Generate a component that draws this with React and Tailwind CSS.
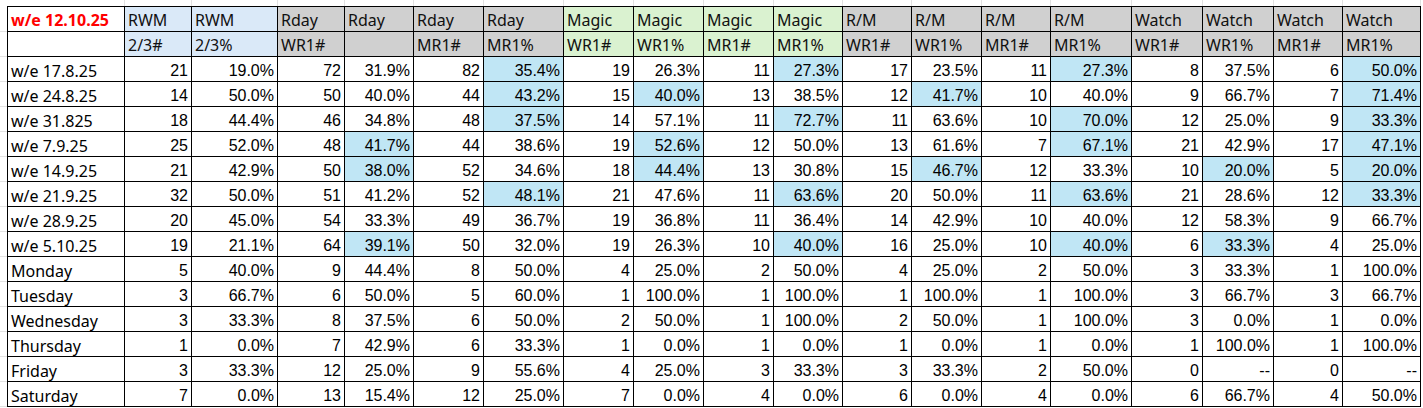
import React from "react";

const widths = [116, 66, 85, 66, 68, 69, 79, 69, 69, 69, 68, 68, 69, 68, 80, 70, 70, 68, 77];

const h1 = ["w/e 12.10.25", "RWM", "RWM", "Rday", "Rday", "Rday", "Rday", "Magic", "Magic", "Magic", "Magic", "R/M", "R/M", "R/M", "R/M", "Watch", "Watch", "Watch", "Watch"];
const h2 = ["", "2/3#", "2/3%", "WR1#", "", "MR1#", "MR1%", "WR1#", "WR1%", "MR1#", "MR1%", "WR1#", "WR1%", "MR1#", "MR1%", "WR1#", "WR1%", "MR1#", "MR1%"];

const headBg = (i) => {
  if (i === 0) return "bg-white";
  if (i <= 2) return "bg-[#dae9f8]";
  if (i >= 7 && i <= 10) return "bg-[#daf2d0]";
  return "bg-[#d0d0d0]";
};

const rows = [
  ["w/e 17.8.25", "21", "19.0%", "72", "31.9%", "82", "35.4%*", "19", "26.3%", "11", "27.3%*", "17", "23.5%", "11", "27.3%*", "8", "37.5%", "6", "50.0%*"],
  ["w/e 24.8.25", "14", "50.0%", "50", "40.0%", "44", "43.2%*", "15", "40.0%*", "13", "38.5%", "12", "41.7%*", "10", "40.0%", "9", "66.7%", "7", "71.4%*"],
  ["w/e 31.825", "18", "44.4%", "46", "34.8%", "48", "37.5%*", "14", "57.1%", "11", "72.7%*", "11", "63.6%", "10", "70.0%*", "12", "25.0%", "9", "33.3%*"],
  ["w/e 7.9.25", "25", "52.0%", "48", "41.7%*", "44", "38.6%", "19", "52.6%*", "12", "50.0%", "13", "61.6%", "7", "67.1%*", "21", "42.9%", "17", "47.1%*"],
  ["w/e 14.9.25", "21", "42.9%", "50", "38.0%*", "52", "34.6%", "18", "44.4%*", "13", "30.8%", "15", "46.7%*", "12", "33.3%", "10", "20.0%*", "5", "20.0%*"],
  ["w/e 21.9.25", "32", "50.0%", "51", "41.2%", "52", "48.1%*", "21", "47.6%", "11", "63.6%*", "20", "50.0%", "11", "63.6%*", "21", "28.6%", "12", "33.3%*"],
  ["w/e 28.9.25", "20", "45.0%", "54", "33.3%", "49", "36.7%", "19", "36.8%", "11", "36.4%", "14", "42.9%", "10", "40.0%", "12", "58.3%", "9", "66.7%"],
  ["w/e 5.10.25", "19", "21.1%", "64", "39.1%*", "50", "32.0%", "19", "26.3%", "10", "40.0%*", "16", "25.0%", "10", "40.0%*", "6", "33.3%*", "4", "25.0%"],
  ["Monday", "5", "40.0%", "9", "44.4%", "8", "50.0%", "4", "25.0%", "2", "50.0%", "4", "25.0%", "2", "50.0%", "3", "33.3%", "1", "100.0%"],
  ["Tuesday", "3", "66.7%", "6", "50.0%", "5", "60.0%", "1", "100.0%", "1", "100.0%", "1", "100.0%", "1", "100.0%", "3", "66.7%", "3", "66.7%"],
  ["Wednesday", "3", "33.3%", "8", "37.5%", "6", "50.0%", "2", "50.0%", "1", "100.0%", "2", "50.0%", "1", "100.0%", "3", "0.0%", "1", "0.0%"],
  ["Thursday", "1", "0.0%", "7", "42.9%", "6", "33.3%", "1", "0.0%", "1", "0.0%", "1", "0.0%", "1", "0.0%", "1", "100.0%", "1", "100.0%"],
  ["Friday", "3", "33.3%", "12", "25.0%", "9", "55.6%", "4", "25.0%", "3", "33.3%", "3", "33.3%", "2", "50.0%", "0", "--", "0", "--"],
  ["Saturday", "7", "0.0%", "13", "15.4%", "12", "25.0%", "7", "0.0%", "4", "0.0%", "6", "0.0%", "4", "0.0%", "6", "66.7%", "4", "50.0%"],
];

const labelFont = "font-['Noto_Sans','Liberation_Sans',sans-serif]";
const numFont = "font-['Liberation_Sans','Arial',sans-serif]";

export default function App() {
  return (
    <div className="w-[1423px] h-[408px] overflow-hidden bg-white text-black">
      <div className="flex h-[6px]">
        <div className="w-[8px] shrink-0" />
        {widths.map((w, i) => (
          <div key={i} className="shrink-0 border-r border-[#e1e1e1]" style={{ width: w + 1 }} />
        ))}
      </div>
      <div className="flex">
        <div className="w-[7px] shrink-0 flex flex-col">
          <div className="h-[26px] border-b border-[#e1e1e1]" />
          {Array.from({ length: 15 }).map((_, i) => (
            <div key={i} className="h-[25px] border-b border-[#e1e1e1]" />
          ))}
        </div>
        <div className="grid grid-cols-[116px_66px_85px_66px_68px_69px_79px_69px_69px_69px_68px_68px_69px_68px_80px_70px_70px_68px_77px] auto-rows-[24px] gap-px p-px bg-black">
          {h1.map((t, i) => (
            <div
              key={"a" + i}
              className={`${headBg(i)} ${labelFont} text-[16px] leading-[24px] pt-px pl-[3px] whitespace-nowrap overflow-hidden ${
                i === 0 ? "text-[#ff0000] font-bold" : "text-[#111]"
              }`}
            >
              {t}
            </div>
          ))}
          {h2.map((t, i) => (
            <div
              key={"b" + i}
              className={`${headBg(i)} ${labelFont} text-[16px] leading-[24px] pt-px pl-[3px] whitespace-nowrap overflow-hidden text-[#111]`}
            >
              {t}
            </div>
          ))}
          {rows.map((r, ri) =>
            r.map((c, ci) => {
              if (ci === 0) {
                return (
                  <div
                    key={ri + "-" + ci}
                    className={`bg-white ${labelFont} text-[16px] leading-[24px] pt-[2px] pl-[3px] whitespace-nowrap overflow-hidden`}
                  >
                    {c}
                  </div>
                );
              }
              const hi = c.endsWith("*");
              const v = hi ? c.slice(0, -1) : c;
              return (
                <div
                  key={ri + "-" + ci}
                  className={`${hi ? "bg-[#c0e6f5]" : "bg-white"} ${numFont} text-[16px] leading-[24px] pt-[2px] text-right pr-[3px] whitespace-nowrap overflow-hidden`}
                >
                  {v}
                </div>
              );
            })
          )}
        </div>
      </div>
    </div>
  );
}
